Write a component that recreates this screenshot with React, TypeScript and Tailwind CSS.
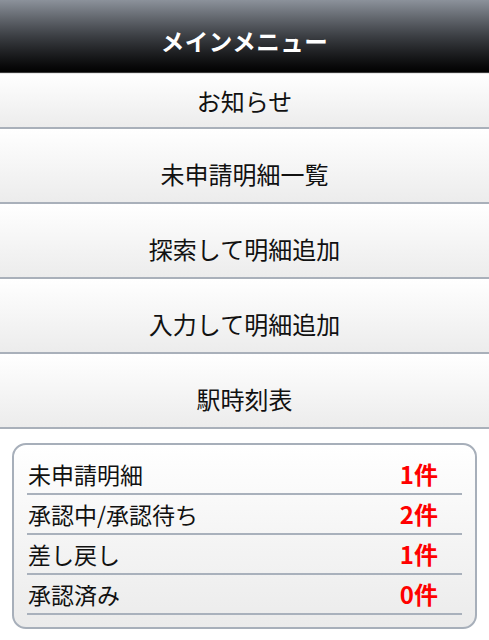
const FONT = { fontFamily: '"Noto Sans CJK JP", "Noto Sans", sans-serif' };

const menu = ["お知らせ", "未申請明細一覧", "探索して明細追加", "入力して明細追加", "駅時刻表"];

const counts = [
  { label: "未申請明細", count: "1件" },
  { label: "承認中/承認待ち", count: "2件" },
  { label: "差し戻し", count: "1件" },
  { label: "承認済み", count: "0件" },
];

export default function App() {
  return (
    <div className="h-[640px] w-[489px] overflow-hidden bg-white" style={FONT}>
      <header className="flex h-[73px] items-center justify-center border-b border-[#3a3a3a] bg-gradient-to-b from-[#8c929b] via-[#3c3f44] to-[#030303]">
        <h1 className="pt-3 text-[23.5px] font-bold tracking-[0.5px] text-white">メインメニュー</h1>
      </header>

      <nav className="flex flex-col">
        {menu.map((item, i) => (
          <button
            key={item}
            className={`flex w-full items-center justify-center border-b-2 border-[#a9b0ba] bg-gradient-to-b from-white to-[#ececec] text-[24px] text-[#111] ${
              i === 0 ? "h-[56px] border-t border-t-[#e8e8e8]" : "h-[75px] pt-4"
            }`}
          >
            {item}
          </button>
        ))}
      </nav>

      <section className="mx-3 mt-[14px] rounded-[14px] border-2 border-[#a7afba] bg-gradient-to-b from-white to-[#ebebeb] px-[13px] pb-3 pt-[10px]">
        {counts.map((row) => (
          <div
            key={row.label}
            className="flex h-[40px] items-center justify-between border-b-2 border-[#a9b1bc] pl-[1px] pr-[24px]"
          >
            <span className="text-[23px] text-[#111]">{row.label}</span>
            <span className="text-[24px] font-bold text-[#ff0000]">{row.count}</span>
          </div>
        ))}
      </section>
    </div>
  );
}
